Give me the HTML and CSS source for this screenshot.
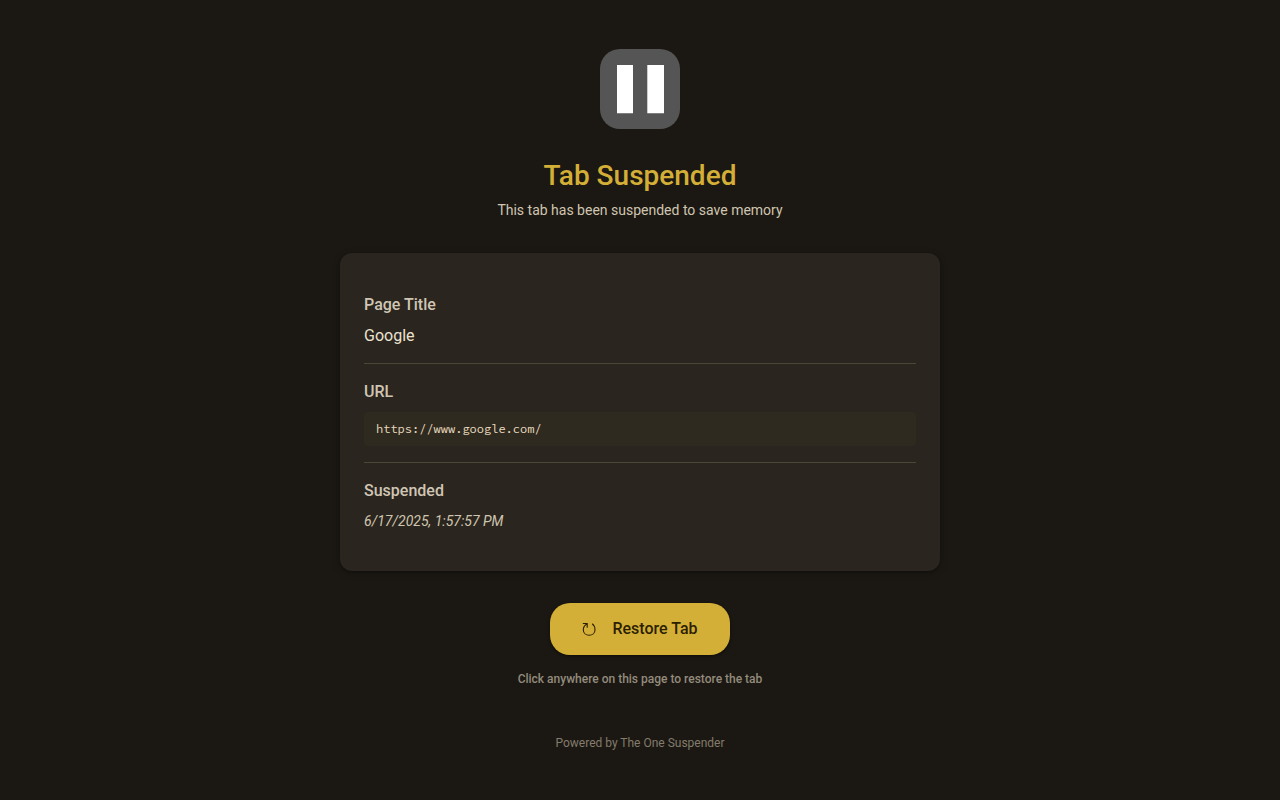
FILE: index.html
```html
<!DOCTYPE html>
<html lang="en">
<head>
  <meta charset="utf-8">
  <meta name="viewport" content="width=device-width, initial-scale=1">
  <title>Tab Suspended</title>
  <link rel="stylesheet" href="styles.css">
</head>
<body>
  <main class="page">
    <svg class="logo" viewBox="0 0 80 80" aria-hidden="true">
      <rect width="80" height="80" rx="20" fill="#555"/>
      <path d="M17 16h16v48.300H17zM47.300 16H64v48.300H47.300z" fill="#fff"/>
    </svg>
    <h1 class="title">Tab Suspended</h1>
    <p class="subtitle">This tab has been suspended to save memory</p>
    <section class="card">
      <div class="item">
        <h2 class="label">Page Title</h2>
        <p class="name">Google</p>
      </div>
      <div class="item">
        <h2 class="label">URL</h2>
        <p class="url">https://www.google.com/</p>
      </div>
      <div class="item">
        <h2 class="label">Suspended</h2>
        <p class="date">6/17/2025, 1:57:57 PM</p>
      </div>
    </section>
    <button class="restore" type="button">
      <svg class="restore-icon" viewBox="0 0 14 16" aria-hidden="true">
        <path d="M0.800 2.500H5.200V6.800M4.800 2.900C2.500 4.200 1.300 6.300 1.300 8.700C1.300 12 3.900 14.200 7.200 14.200C10.500 14.200 13 12 13 8.700C13 6.200 12 4 10.200 2.700" fill="none" stroke="currentColor" stroke-width="1.100"/>
      </svg>
      <span>Restore Tab</span>
    </button>
    <p class="hint">Click anywhere on this page to restore the tab</p>
    <footer class="footer">Powered by The One Suspender</footer>
  </main>
</body>
</html>
```
FILE: styles.css
```css
* {
  box-sizing: border-box;
}

body {
  margin: 0;
  background: #1b1813;
  color: #ebe2d0;
  font-family: Roboto, "Liberation Sans", sans-serif;
}

h1, h2, p {
  margin: 0;
}

.page {
  display: flex;
  flex-direction: column;
  align-items: center;
  justify-content: center;
  min-height: 100vh;
  padding: 24px;
}

.logo {
  width: 80px;
  height: 80px;
  margin-bottom: 29px;
}

.title {
  color: #d4af37;
  font-size: 28px;
  font-weight: 500;
  line-height: 36px;
}

.subtitle {
  margin: 6px 0 33px;
  color: #d0c5b0;
  font-size: 14px;
  line-height: 20px;
}

.card {
  width: 100%;
  max-width: 600px;
  padding: 24px;
  border-radius: 12px;
  background: #2a251e;
  box-shadow: 0 2px 6px 2px rgba(0, 0, 0, 0.15), 0 1px 2px rgba(0, 0, 0, 0.3);
}

.item {
  padding: 16px 0;
}

.item + .item {
  border-top: 1px solid #4c4637;
}

.label {
  margin-bottom: 8px;
  color: #d0c5b4;
  font-size: 16px;
  font-weight: 500;
  line-height: 24px;
}

.name {
  font-size: 16px;
  line-height: 22px;
}

.url {
  padding: 8px 12px;
  border-radius: 4px;
  background: #2f2a1f;
  color: #e6d9be;
  font-family: "Source Code Pro", "Noto Sans Mono", "DejaVu Sans Mono", monospace;
  font-size: 12px;
  line-height: 18px;
  overflow-wrap: anywhere;
}

.date {
  color: #d0c5b0;
  font-size: 14px;
  font-style: italic;
  line-height: 20px;
}

.restore {
  display: flex;
  align-items: center;
  gap: 16px;
  margin-top: 32px;
  padding: 14px 32px;
  border: 0;
  border-radius: 20px;
  background: #d4af37;
  color: #2c1f00;
  box-shadow: 0 1px 3px 1px rgba(0, 0, 0, 0.15), 0 1px 2px rgba(0, 0, 0, 0.3);
  font: 500 16px/24px Roboto, "Liberation Sans", sans-serif;
  cursor: pointer;
}

.restore-icon {
  width: 14px;
  height: 16px;
}

.hint {
  margin-top: 16px;
  color: #938b7c;
  font-size: 12px;
  font-weight: 500;
  line-height: 16px;
}

.footer {
  margin-top: 48px;
  color: #847b6b;
  font-size: 12px;
  line-height: 16px;
}
```
